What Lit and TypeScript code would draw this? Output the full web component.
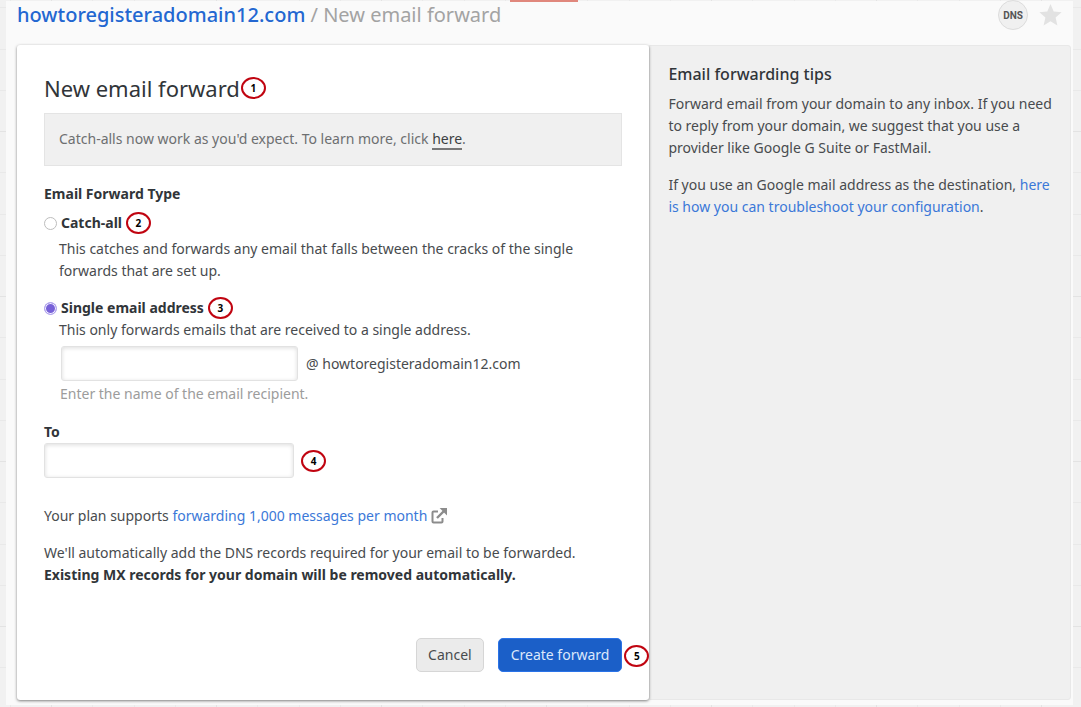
import { LitElement, html, css } from "lit";
import { customElement, property, state } from "lit/decorators.js";

@customElement("step-marker")
class StepMarker extends LitElement {
  @property() label = "";

  static styles = css`
    :host {
      display: inline-flex;
      flex: none;
    }
    .ring {
      box-sizing: border-box;
      display: flex;
      align-items: center;
      justify-content: center;
      width: 25px;
      height: 22px;
      border: 2px solid #c00410;
      border-radius: 50%;
      background: #fff;
      color: #000;
      font: bold 10px/12px "Noto Sans", sans-serif;
    }
  `;

  render() {
    return html`<span class="ring">${this.label}</span>`;
  }
}

@customElement("app-root")
class AppRoot extends LitElement {
  @state() private kind = "single";

  static styles = css`
    :host {
      display: block;
      font: 14px/22px "Noto Sans", "Open Sans", sans-serif;
      color: #484b4e;
    }
    * {
      box-sizing: border-box;
    }
    h1,
    h2,
    p,
    fieldset,
    legend {
      margin: 0;
      padding: 0;
      border: 0;
    }
    a {
      color: #3b78d8;
      text-decoration: none;
    }
    .backdrop {
      display: flex;
      min-height: 100vh;
      padding: 1px 8px 2px 6px;
      background-color: #f1f1f1;
      background-image: linear-gradient(#e3e3e3 1px, transparent 1px),
        linear-gradient(
          transparent 41px,
          #e9e9e9 41px 42px,
          transparent 42px 83px,
          #e9e9e9 83px 84px,
          transparent 84px 124px,
          #e9e9e9 124px 125px,
          transparent 125px
        ),
        linear-gradient(
          90deg,
          #e3e3e3 1px,
          transparent 1px 41px,
          #e9e9e9 41px 42px,
          transparent 42px 83px,
          #e9e9e9 83px 84px,
          transparent 84px 124px,
          #e9e9e9 124px 125px,
          transparent 125px
        );
      background-size: 165px 165px;
      background-position: 51px 131px;
    }
    .tab-line {
      position: absolute;
      top: 0;
      left: 510px;
      width: 68px;
      height: 2px;
      background: #e0877c;
    }
    .page {
      flex: 1;
      display: flex;
      flex-direction: column;
      min-width: 0;
      padding: 0 2px 5px 11px;
      background: #fafafa;
    }
    .topbar {
      display: flex;
      align-items: center;
      justify-content: space-between;
      height: 28px;
      margin-bottom: 16px;
      padding-right: 9px;
    }
    .crumbs {
      font-size: 20px;
      line-height: 28px;
      color: #a3a3a3;
    }
    .crumbs a {
      color: #2367d1;
      font-weight: 500;
    }
    .tools {
      display: flex;
      align-items: center;
      gap: 11px;
    }
    .dns {
      width: 30px;
      height: 30px;
      padding: 1px 0 0;
      border: 1px solid #dcdcdc;
      border-radius: 50%;
      background: #f0f0f0;
      color: #555;
      font: bold 10px/12px Roboto, sans-serif;
    }
    .star {
      display: flex;
      padding: 0;
      border: 0;
      background: none;
    }
    .columns {
      flex: 1;
      display: grid;
      grid-template-columns: 3fr 2fr;
    }
    .card {
      position: relative;
      padding: 28px 27px 27px;
      border-radius: 3px;
      background: #fff;
      box-shadow: 0 1px 3px rgba(0, 0, 0, 0.5);
    }
    .title {
      display: flex;
      align-items: center;
      gap: 1px;
      color: #313539;
    }
    .title h1 {
      font-size: 22px;
      line-height: 30px;
      font-weight: 400;
    }
    .notice {
      margin: 10px 0 17px;
      padding: 14px 14px 15px;
      border: 1px solid #e4e4e4;
      background: #f0f0f0;
      color: #6d6f71;
    }
    .notice a {
      color: #3c3f42;
      border-bottom: 2px solid #777;
      line-height: 18px;
      display: inline-block;
    }
    .strong {
      display: block;
      color: #313539;
      font-weight: 700;
    }
    .option {
      display: flex;
      align-items: center;
      gap: 4px;
    }
    .option.first {
      margin-top: 7px;
    }
    .option.second {
      margin-top: 15px;
    }
    .radio {
      appearance: none;
      width: 13px;
      height: 13px;
      margin: 0;
      border: 1px solid #bdbdbd;
      border-radius: 50%;
      background: #fff;
    }
    .radio:checked {
      border-color: #b3a7ee;
      background: #7761d8;
      box-shadow: inset 0 0 0 1px #f3f0ff;
    }
    .about {
      padding-left: 15px;
    }
    .about.spaced {
      margin-top: 4px;
    }
    .address {
      display: flex;
      align-items: center;
      gap: 8px;
      margin: 5px 0 2px 17px;
    }
    .field {
      height: 35px;
      padding: 0 8px;
      border: 1px solid #e2e2e2;
      border-radius: 3px;
      outline: 0;
      background: #fff;
      box-shadow: inset 0 1px 4px rgba(0, 0, 0, 0.14);
      color: inherit;
      font: inherit;
    }
    .field.local {
      width: 237px;
    }
    .field.to {
      width: 250px;
    }
    .hint {
      padding-left: 16px;
      color: #9c9c9c;
    }
    .to-label {
      margin-top: 16px;
    }
    .to-row {
      display: flex;
      align-items: center;
      gap: 7px;
    }
    .plan {
      display: flex;
      align-items: center;
      gap: 4px;
      margin: 27px 0 15px;
    }
    .actions {
      display: flex;
      justify-content: flex-end;
      gap: 14px;
      margin-top: 52px;
    }
    .btn {
      height: 34px;
      padding: 0 11px;
      border: 1px solid #d6d6d6;
      border-radius: 5px;
      background: #ebebeb;
      color: #484b4e;
      font: inherit;
      font-size: 14px;
    }
    .btn.primary {
      padding: 0 12px;
      border-color: #2a73e8;
      background: #1b5fc8;
      color: #dce8fb;
    }
    .last-step {
      position: absolute;
      right: 0;
      bottom: 33px;
    }
    .tips {
      padding: 17px 18px 24px;
      border: 1px solid #e8e8e8;
      border-radius: 0 3px 3px 0;
      background: #f0f0f0;
    }
    .tips h2 {
      margin-bottom: 8px;
      color: #313539;
      font-size: 16px;
      line-height: 22px;
      font-weight: 500;
    }
    .tips p + p {
      margin-top: 15px;
    }
  `;

  render() {
    return html`
      <div class="backdrop">
        <div class="tab-line"></div>
        <div class="page">
          <header class="topbar">
            <nav class="crumbs">
              <a href="#">howtoregisteradomain12.com</a> / New email forward
            </nav>
            <div class="tools">
              <button class="dns" type="button">DNS</button>
              <button class="star" type="button" aria-label="Favourite">
                <svg width="23" height="22" viewBox="0 0 23 22">
                  <path
                    fill="#e2e2e2"
                    d="M11.5 0 L14.7 7.4 L22.6 8.2 L16.6 13.4 L18.4 21.4 L11.5 17.2 L4.6 21.4 L6.4 13.4 L0.4 8.2 L8.3 7.4 Z"
                  />
                </svg>
              </button>
            </div>
          </header>
          <main class="columns">
            <form class="card" @submit=${(e: Event) => e.preventDefault()}>
              <div class="title">
                <h1>New email forward</h1>
                <step-marker label="1"></step-marker>
              </div>
              <p class="notice">
                Catch-alls now work as you'd expect. To learn more, click
                <a href="#">here</a>.
              </p>
              <fieldset>
                <legend class="strong">Email Forward Type</legend>
                <div class="option first">
                  <input
                    class="radio"
                    type="radio"
                    name="kind"
                    id="catch-all"
                    .checked=${this.kind === "catch-all"}
                    @change=${() => (this.kind = "catch-all")}
                  />
                  <label class="strong" for="catch-all">Catch-all</label>
                  <step-marker label="2"></step-marker>
                </div>
                <p class="about spaced">
                  This catches and forwards any email that falls between the
                  cracks of the single forwards that are set up.
                </p>
                <div class="option second">
                  <input
                    class="radio"
                    type="radio"
                    name="kind"
                    id="single"
                    .checked=${this.kind === "single"}
                    @change=${() => (this.kind = "single")}
                  />
                  <label class="strong" for="single">Single email address</label>
                  <step-marker label="3"></step-marker>
                </div>
                <p class="about">
                  This only forwards emails that are received to a single
                  address.
                </p>
                <div class="address">
                  <input class="field local" id="local" type="text" aria-describedby="local-hint" />
                  <label for="local">@ howtoregisteradomain12.com</label>
                </div>
                <p class="hint" id="local-hint">
                  Enter the name of the email recipient.
                </p>
              </fieldset>
              <label class="strong to-label" for="to">To</label>
              <div class="to-row">
                <input class="field to" id="to" type="text" />
                <step-marker label="4"></step-marker>
              </div>
              <p class="plan">
                <span
                  >Your plan supports
                  <a href="#">forwarding 1,000 messages per month</a></span
                >
                <svg width="16" height="16" viewBox="0 0 16 16" fill="none" stroke="#8c8c8c">
                  <path d="M7 3.5H2.5a1 1 0 0 0-1 1v9a1 1 0 0 0 1 1h8a1 1 0 0 0 1-1V10" stroke-width="2" />
                  <path d="M6 10L13 3" stroke-width="2.4" />
                  <path d="M8.6 0H16V7.4Z" fill="#8c8c8c" stroke="none" />
                </svg>
              </p>
              <p>
                We'll automatically add the DNS records required for your email
                to be forwarded.
                <strong class="strong"
                  >Existing MX records for your domain will be removed
                  automatically.</strong
                >
              </p>
              <div class="actions">
                <button class="btn" type="button">Cancel</button>
                <button class="btn primary" type="submit">Create forward</button>
              </div>
              <step-marker class="last-step" label="5"></step-marker>
            </form>
            <aside class="tips">
              <h2>Email forwarding tips</h2>
              <p>
                Forward email from your domain to any inbox. If you need to
                reply from your domain, we suggest that you use a provider like
                Google G Suite or FastMail.
              </p>
              <p>
                If you use an Google mail address as the destination,
                <a href="#">here is how you can troubleshoot your configuration</a>.
              </p>
            </aside>
          </main>
        </div>
      </div>
    `;
  }
}
